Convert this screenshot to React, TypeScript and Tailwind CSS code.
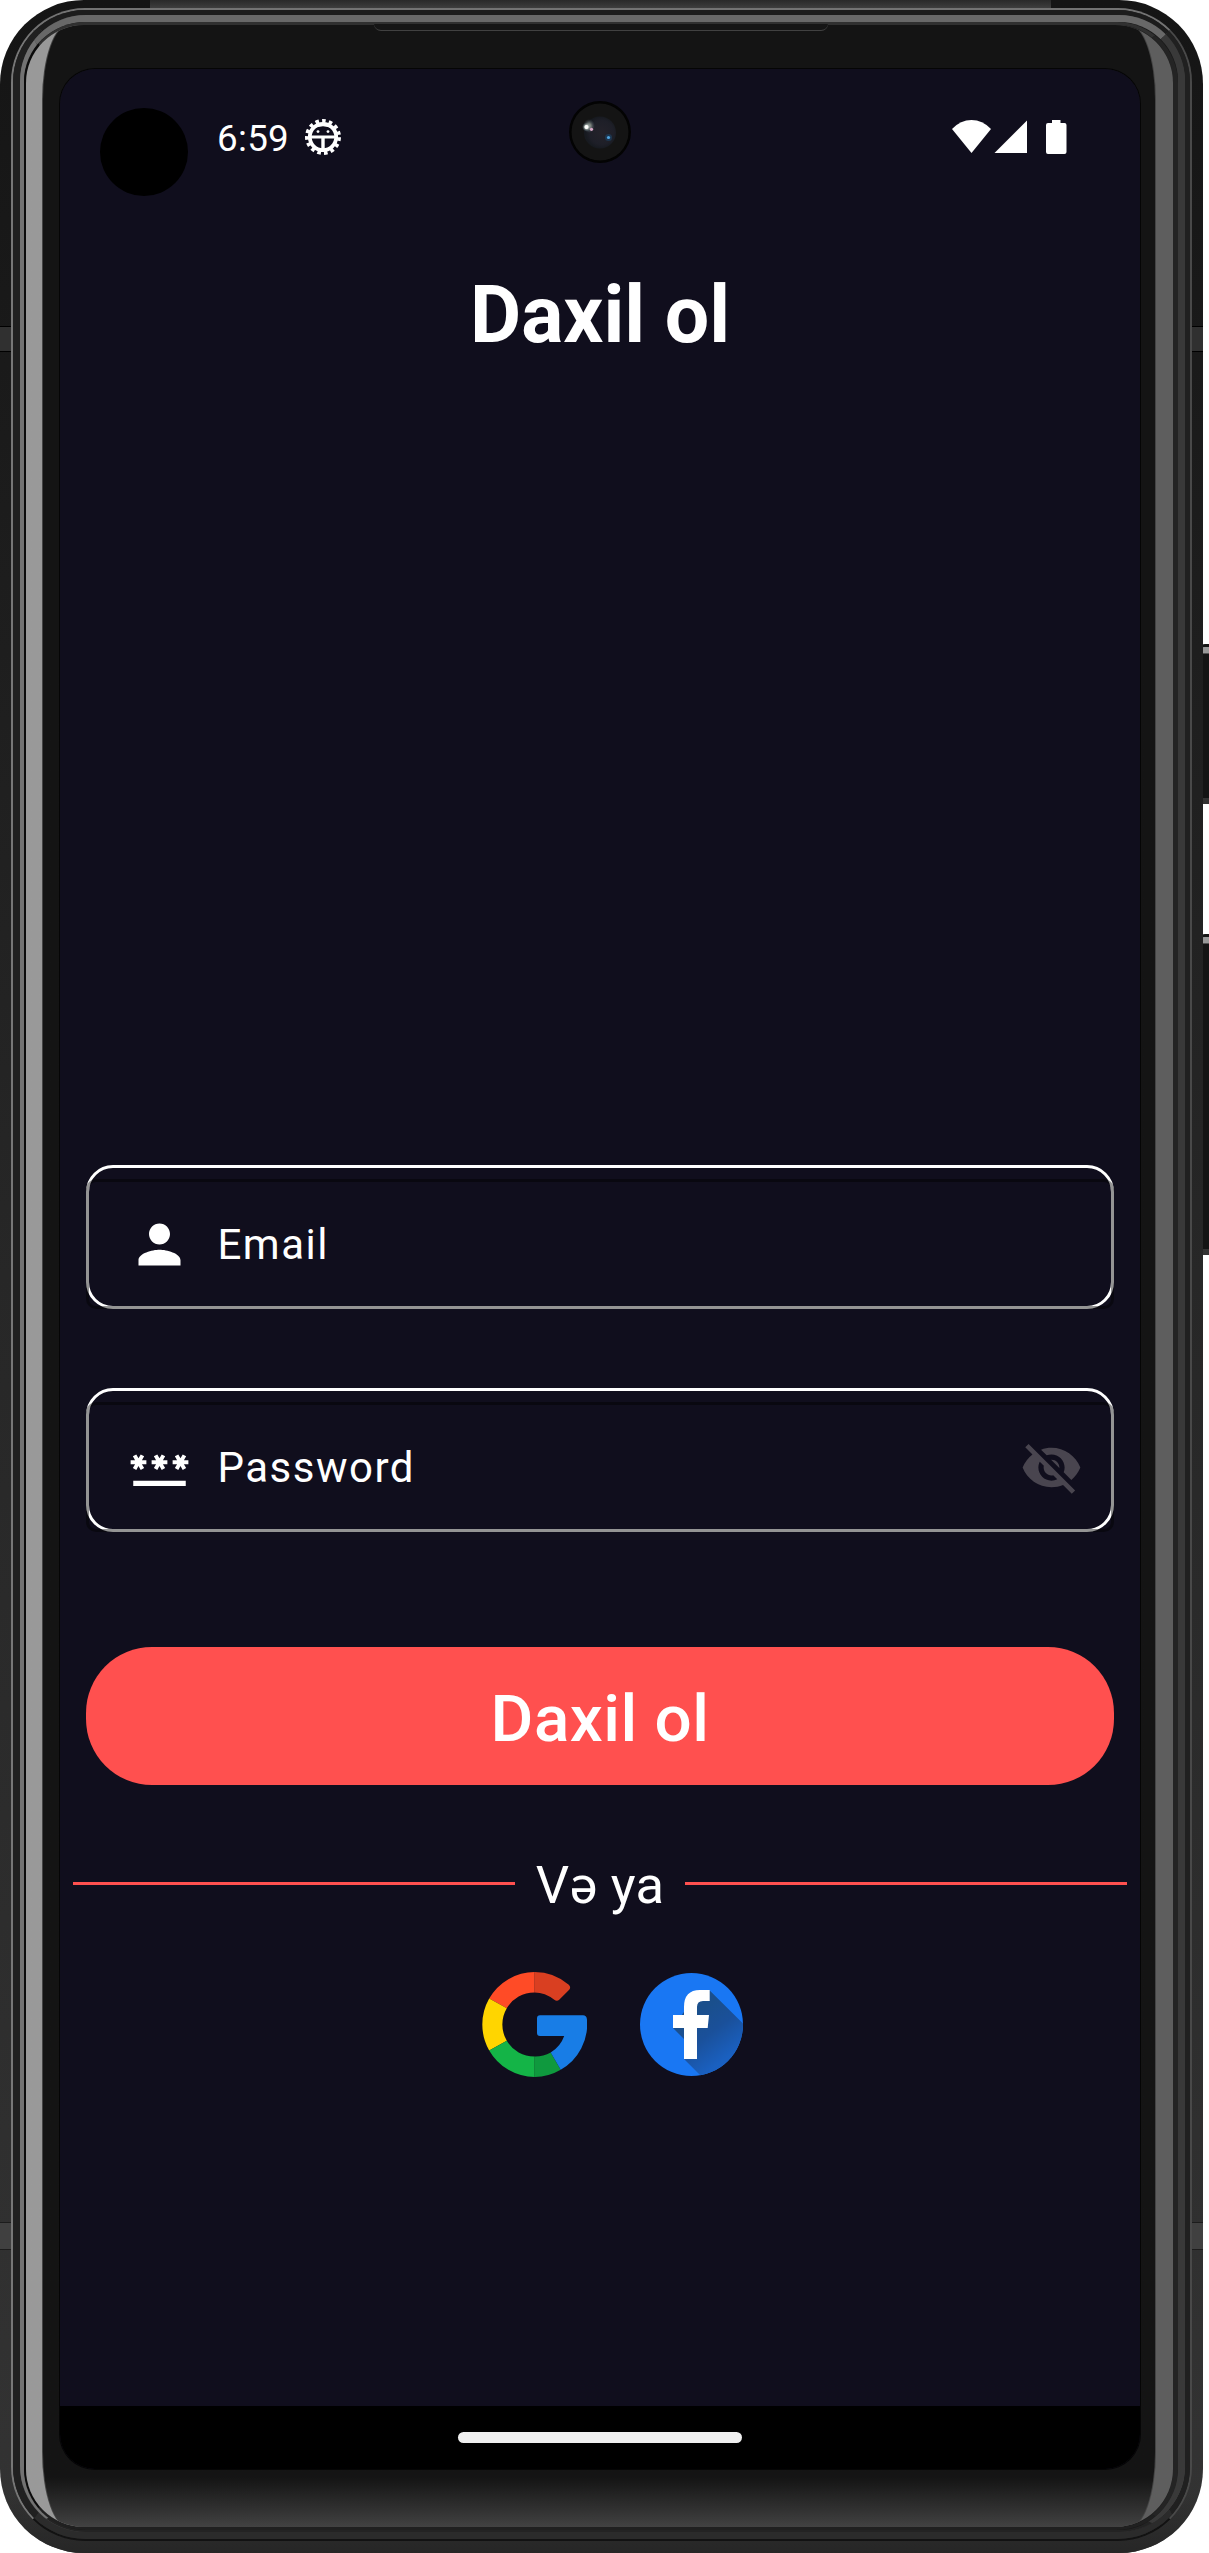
import type { ReactNode } from "react";
import { MdPassword, MdPerson, MdVisibilityOff } from "react-icons/md";

function BugIcon() {
  return (
    <svg viewBox="0 0 36 36" className="h-9 w-9" fill="none" stroke="#fff">
      <circle cx="18" cy="18" r="13.2" strokeWidth="3.8" />
      <circle cx="18" cy="18" r="16.2" strokeWidth="3.6" strokeDasharray="3.6 3.186" strokeDashoffset="-0.3" />
      <path d="M5 18h26" strokeWidth="2.8" />
      <path d="M18 18v15" strokeWidth="3.4" />
      <path d="M8 10Q18 2 28 10Q18 4.500 8 10Z" fill="#fff" stroke="none" />
      <circle cx="13" cy="12.600" r="1.400" fill="#fff" stroke="none" />
      <circle cx="23" cy="12.600" r="1.400" fill="#fff" stroke="none" />
    </svg>
  );
}

function SystemIcons() {
  return (
    <svg viewBox="0 0 115 35" className="h-[35px] w-[115px]" fill="#fff">
      <path d="M0 9Q8.500 0 19.500 0T39 9L19.500 33Z" />
      <path d="M42.500 33L75 .5V33Z" />
      <path d="M100 0h8.500v3h4a2 2 0 0 1 2 2v27a2 2 0 0 1-2 2h-16.500a2 2 0 0 1-2-2v-27a2 2 0 0 1 2-2h4Z" />
    </svg>
  );
}

function Camera() {
  return (
    <svg viewBox="0 0 62 62" className="h-[62px] w-[62px]">
      <defs>
        <radialGradient id="lens" cx=".55" cy=".5" r=".5">
          <stop offset="0" stopColor="#24222a" />
          <stop offset=".75" stopColor="#1e1f28" />
          <stop offset="1" stopColor="#171a20" />
        </radialGradient>
        <radialGradient id="glint">
          <stop offset="0" stopColor="#fff" />
          <stop offset=".3" stopColor="#cdd8c4" />
          <stop offset="1" stopColor="#52667a" stopOpacity="0" />
        </radialGradient>
      </defs>
      <circle cx="31" cy="31" r="31" fill="#030303" />
      <circle cx="31" cy="31" r="28.500" fill="#141414" />
      <circle cx="31" cy="31.500" r="16" fill="url(#lens)" />
      <ellipse cx="20" cy="25" rx="6" ry="7" fill="url(#glint)" opacity=".55" />
      <circle cx="17.500" cy="26" r="4.500" fill="url(#glint)" />
      <circle cx="17.500" cy="26" r="2" fill="#fff" />
      <circle cx="22.500" cy="28.300" r="1.600" fill="#d9a9c8" />
      <circle cx="39.500" cy="36.500" r="3.500" fill="#1d4468" opacity=".6" />
      <circle cx="39.500" cy="36.500" r="1.600" fill="#4fa4e0" />
    </svg>
  );
}

function GoogleLogo() {
  return (
    <svg viewBox="0 0 105 105" className="h-[105px] w-[105px]">
      <path d="M7.200 26.500L24.800 36.200A32 32 0 0 1 52.700 20.500V0A52.500 52.500 0 0 0 7.200 26.500Z" fill="#ff4b26" />
      <path d="M52.700 0V20.500Q63 20.500 72.300 27.800Q75 29.800 77.200 27.700L87.200 17.700Q89.300 15.200 86.800 12.800Q72 0 52.700 0Z" fill="#d93f21" />
      <path d="M7.200 26.500L24.800 36.200A32 32 0 0 0 24.800 68.800L7.200 78.500A52.500 52.500 0 0 1 7.200 26.500Z" fill="#ffd500" />
      <path d="M7.200 78.500L24.800 68.800A32 32 0 0 0 52.700 84.500V105A52.500 52.500 0 0 1 7.200 78.500Z" fill="#14b447" />
      <path d="M52.700 84.500A32 32 0 0 0 68.700 80.500L78.700 97.800A52.500 52.500 0 0 1 52.700 105Z" fill="#0f993e" />
      <path d="M78.700 97.800L68.700 80.500Q78.500 74.500 82.200 64H58Q55 64 55 61V46.300Q55 43.300 58 43.300H101Q104.400 43.300 104.900 47A52.500 52.500 0 0 1 78.700 97.800Z" fill="#187de6" />
    </svg>
  );
}

function FacebookLogo() {
  return (
    <svg viewBox="0 0 103 103" className="h-[103px] w-[103px]">
      <defs>
        <linearGradient id="fshade" x1="50" y1="45" x2="82" y2="88" gradientUnits="userSpaceOnUse">
          <stop offset="0" stopColor="#1a4f8c" />
          <stop offset=".45" stopColor="#1a509a" />
          <stop offset="1" stopColor="#1a60c0" />
        </linearGradient>
        <clipPath id="disc">
          <circle cx="51.500" cy="51.500" r="51.500" />
        </clipPath>
      </defs>
      <g clipPath="url(#disc)">
        <rect width="103" height="103" fill="#1977f3" />
        <path d="M69.700 17.500L110 57.500V110H68L44 86V66L33 55L50 30Z" fill="url(#fshade)" />
      </g>
      <path d="M44 86V55H33V42H44V34Q44 17 60 17H69.700V28H63Q57 28 57 34V42H69L67.700 55H57V86Z" fill="#fff" />
    </svg>
  );
}

function Field({ icon, label, trailing }: { icon: ReactNode; label: string; trailing?: ReactNode }) {
  return (
    <div className="relative flex h-36 items-center rounded-[27px] border-[3px] border-white pt-[15px] pr-[28px] pl-[38.500px]">
      <div className="absolute -inset-x-[3px] top-[11px] -bottom-[3px] rounded-[10px] border-[3px] border-black/42" />
      <span className="text-[63px]">{icon}</span>
      <span className="ml-[27px] flex-1 text-[42px] leading-[50px] tracking-[1.500px]">{label}</span>
      <span className="text-[63px] text-[#49454f]">{trailing}</span>
    </div>
  );
}

function Screen() {
  return (
    <main className="flex h-[2400px] w-[1080px] flex-col overflow-hidden rounded-[35px] bg-[#100e1d] text-white">
      <header className="relative flex h-[136px] items-start pl-10">
        <div className="mt-[39px] h-[88px] w-[88px] rounded-full bg-black" />
        <span className="mt-[48px] ml-[29px] w-[88px] text-[36.750px] leading-[44px] tracking-[0.300px]">6:59</span>
        <div className="mt-[50px]">
          <BugIcon />
        </div>
        <div className="mt-[51px] mr-[73px] ml-auto">
          <SystemIcons />
        </div>
        <div className="absolute top-[32px] left-[509px]">
          <Camera />
        </div>
      </header>
      <h1 className="mt-[64px] text-center text-[78.750px] leading-[92px] font-bold">Daxil ol</h1>
      <form className="mt-[804px] flex flex-col px-[26px]">
        <Field icon={<MdPerson />} label="Email" />
        <div className="h-[79px]" />
        <Field icon={<MdPassword />} label="Password" trailing={<MdVisibilityOff />} />
        <button type="button" className="mt-[115px] h-[138px] rounded-[66px] bg-[#ff504f] pt-[5px] text-[65.600px] leading-[77px] font-medium tracking-[0.500px]">
          Daxil ol
        </button>
      </form>
      <div className="mt-[66px] flex h-[64px] items-center gap-[21px] px-[13px]">
        <span className="h-[3px] flex-1 bg-[#ff504f]" />
        <span className="pt-[4px] text-[52.500px] leading-[62px] tracking-[0.250px]">Və ya</span>
        <span className="h-[3px] flex-1 bg-[#ff504f]" />
      </div>
      <div className="mt-[57px] flex items-center gap-[53px] pl-[422px]">
        <GoogleLogo />
        <FacebookLogo />
      </div>
      <footer className="mt-auto flex h-[63px] items-center justify-center bg-black">
        <span className="h-[11px] w-[284px] rounded-full bg-[#f0f0f0]" />
      </footer>
    </main>
  );
}

function Bezel({ children }: { children: ReactNode }) {
  return (
    <div className="relative h-[2553px] w-[1203px] overflow-hidden rounded-[84px] bg-linear-to-b from-[#151515] via-[#272727] via-50% to-[#333] pt-[8px] pr-[11px] pb-[12px] pl-[11px]">
      <div className="absolute top-0 left-[150px] h-[8px] w-[901px] bg-linear-to-b from-[#292929] to-[#3e3e3e]" />
      <div className="absolute inset-x-0 bottom-0 h-[60px] bg-linear-to-b from-transparent to-[#262626]" />
      <div className="absolute top-[326px] left-0 h-[26px] w-[11px] border-y border-black bg-[#303030]" />
      <div className="absolute top-[326px] right-0 h-[26px] w-[13px] border-y border-black bg-[#303030]" />
      <div className="absolute top-[2222px] left-0 h-[28px] w-[11px] border-y border-[#1c1c1c] bg-[#404040]" />
      <div className="absolute top-[2222px] right-0 h-[28px] w-[13px] border-y border-[#1c1c1c] bg-[#404040]" />
      <div className="relative h-full rounded-[74px] border-[2px] border-t-[#737373] border-r-[#494949] border-b-[#121212] border-l-[#777777] bg-[#222]">
        <div className="h-full rounded-[72px] border-t-[5px] border-r-[5px] border-b-[7px] border-l-[7px] border-t-[#1c1c1c] border-r-[#202020] border-b-[#2b2b2b] border-l-[#202020] bg-[#444]">
          <div className="h-full rounded-[66px] border-t-[7px] border-r-[7px] border-b-[2px] border-l-[4px] border-t-[#686868] border-r-[#393939] border-b-[#232323] border-l-[#727272] bg-[#191919]">
            <div className="h-full rounded-[61px] border-t-[3px] border-r-[5px] border-b-[3px] border-l-[2px] border-t-[#303030] border-r-[#242424] border-b-[#202020] border-l-[#0b0b0b] bg-[#191919]">
              <div className="h-full overflow-hidden rounded-[58px] bg-linear-to-r from-[#999] from-50% to-[#5e5e5e] to-50% pr-[18px] pl-[17px]">
                <div className="h-full rounded-[26px_26px_26px_26px/75px_75px_75px_75px] bg-[#141414] bg-linear-to-b from-[#141414] from-98% to-[#424242] pt-[44px] pr-[15px] pl-[17px] shadow-[0_0_0_1px_#444]">
                  <div className="rounded-[35px] shadow-[0_0_0_1px_#050505]">{children}</div>
                </div>
              </div>
            </div>
          </div>
        </div>
      </div>
      <div className="absolute top-[24px] left-[374px] h-[7px] w-[454px] rounded-b-[8px] border-b border-[#414141] bg-[#151515]" />
    </div>
  );
}

export default function App() {
  return (
    <div className="relative h-[2553px] w-[1209px] overflow-hidden bg-white font-['Roboto',sans-serif]">
      <div className="absolute top-[644px] right-0 h-[160px] w-[8px] rounded-tl-sm border-t-[3px] border-b-[6px] border-t-[#151515] border-b-[#333] bg-[#141414] bg-linear-to-b from-[#999] from-[6px] to-[#141414] to-[7px]" />
      <div className="absolute top-[934px] right-0 h-[321px] w-[8px] rounded-tl-sm border-t-[3px] border-b-[6px] border-t-[#151515] border-b-[#333] bg-[#141414] bg-linear-to-b from-[#999] from-[6px] to-[#141414] to-[7px]" />
      <Bezel>
        <Screen />
      </Bezel>
    </div>
  );
}
